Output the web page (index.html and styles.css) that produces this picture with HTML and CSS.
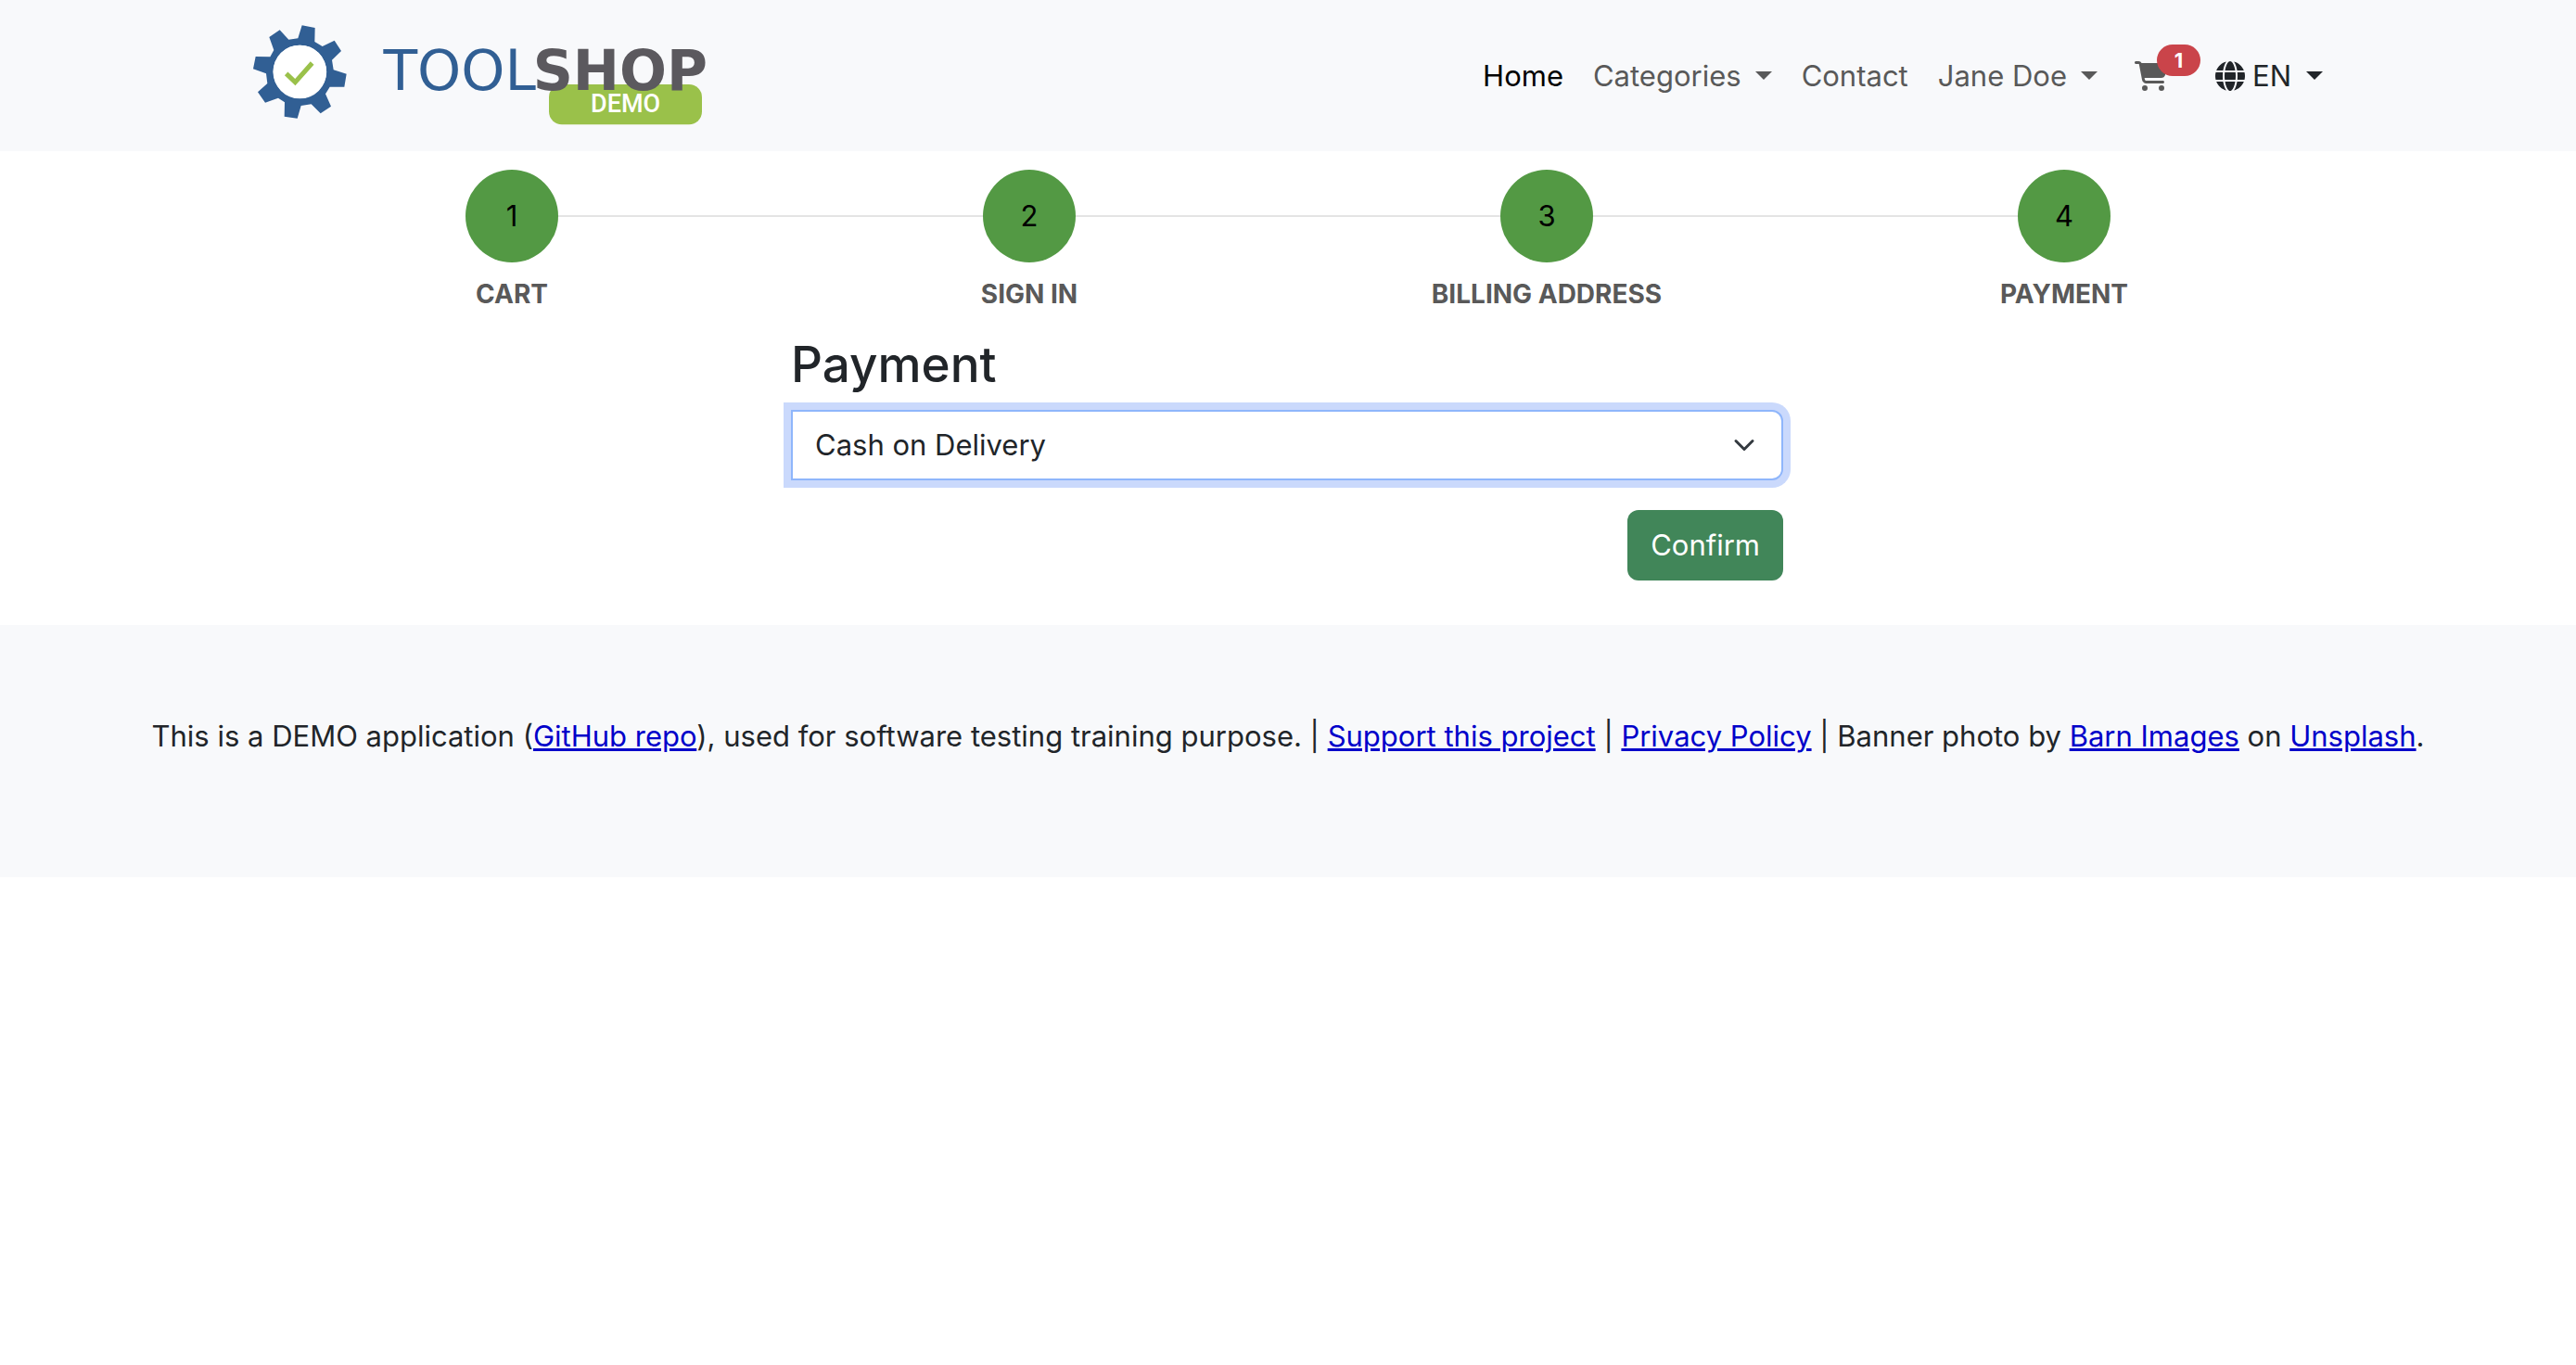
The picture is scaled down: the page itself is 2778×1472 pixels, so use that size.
FILE: index.html
```html
<!DOCTYPE html>
<html lang="en">
<head>
<meta charset="utf-8">
<meta name="viewport" content="width=device-width, initial-scale=1">
<title>Payment - Toolshop</title>
<link rel="stylesheet" href="styles.css">
</head>
<body>
<header class="navbar">
  <div class="container navbar-inner">
    <a class="brand" href="#" aria-label="Toolshop demo">
      <svg class="logo" viewBox="39 50 1476 330">
        <path fill="#315f94" fill-rule="evenodd" d="M197 51L239 59L238 104L263 119L302 100L324 134L294 163L299 195L341 208L334 250L287 250L273 273L291 313L257 336L227 306L194 311L182 352L140 346L141 300L120 286L78 301L54 267L85 239L81 207L39 192L47 152L94 153L106 131L91 89L125 66L154 97L184 93ZM190 115A86 86 0 1 0 190 288A86 86 0 1 0 190 115Z"/>
        <circle cx="190" cy="201" r="86" fill="#fff"/>
        <path fill="none" stroke="#9ac14a" stroke-width="15" d="M146 207L175 235L230 173"/>
        <rect x="996" y="242" width="495" height="130" rx="42" fill="#9ac14a"/>
        <text class="logo-tool" x="954" y="260">TOOL</text>
        <text class="logo-shop" x="944" y="260">SHOP</text>
        <text class="logo-demo" x="1244" y="333">DEMO</text>
      </svg>
    </a>
    <nav class="nav" aria-label="Main">
      <a class="nav-link active" href="#">Home</a>
      <button class="nav-link caret" type="button">Categories</button>
      <a class="nav-link" href="#">Contact</a>
      <button class="nav-link caret" type="button">Jane Doe</button>
      <a class="nav-link cart" href="#" aria-label="Cart">
        <svg class="cart-icon" viewBox="0 0 576 512"><path fill="currentColor" d="M0 24C0 10.7 10.7 0 24 0L69.5 0c22 0 41.5 12.8 50.6 32l411 0c26.3 0 45.5 25 38.6 50.4l-41 152.3c-8.5 31.4-37 53.3-69.5 53.3l-288.5 0 5.4 28.5c2.2 11.3 12.1 19.5 23.6 19.5L488 336c13.3 0 24 10.7 24 24s-10.7 24-24 24l-288.3 0c-34.6 0-64.3-24.6-70.7-58.5L77.4 54.5c-.7-3.8-4-6.5-7.9-6.5L24 48C10.7 48 0 37.3 0 24zM128 464a48 48 0 1 1 96 0 48 48 0 1 1 -96 0zm336-48a48 48 0 1 1 0 96 48 48 0 1 1 0-96z"/></svg>
        <span class="badge">1</span>
      </a>
      <button class="nav-link language caret" type="button">
        <svg class="globe-icon" viewBox="0 0 512 512"><path fill="currentColor" d="M352 256c0 22.2-1.2 43.6-3.3 64l-185.3 0c-2.2-20.4-3.3-41.8-3.3-64s1.2-43.6 3.3-64l185.3 0c2.2 20.4 3.3 41.8 3.3 64zm28.8-64l123.1 0c5.3 20.5 8.1 41.9 8.1 64s-2.8 43.5-8.1 64l-123.1 0c2.1-20.6 3.2-42 3.2-64s-1.1-43.4-3.2-64zm112.6-32l-116.7 0c-10-63.9-29.8-117.4-55.3-151.6c78.3 20.7 142 77.5 171.9 151.6zm-149.1 0l-176.6 0c6.1-36.4 15.5-68.6 27-94.7c10.5-23.6 22.2-40.7 33.5-51.5C239.4 3.2 248.7 0 256 0s16.6 3.2 27.8 13.8c11.3 10.8 23 27.9 33.5 51.5c11.6 26 20.9 58.2 27 94.7zm-209 0L18.6 160C48.6 85.9 112.2 29.1 190.6 8.4C165.1 42.6 145.3 96.1 135.3 160zM8.1 192l123.1 0c-2.1 20.6-3.2 42-3.2 64s1.1 43.4 3.2 64L8.1 320C2.8 299.5 0 278.1 0 256s2.8-43.5 8.1-64zM194.7 446.6c-11.6-26-20.9-58.2-27-94.6l176.6 0c-6.1 36.4-15.5 68.6-27 94.6c-10.5 23.6-22.2 40.7-33.5 51.5C272.6 508.8 263.3 512 256 512s-16.6-3.2-27.8-13.8c-11.3-10.8-23-27.9-33.5-51.5zM135.3 352c10 63.9 29.8 117.4 55.3 151.6C112.2 482.9 48.6 426.1 18.6 352l116.7 0zm358.1 0c-30 74.1-93.6 130.9-171.9 151.6c25.5-34.2 45.2-87.7 55.3-151.6l116.7 0z"/></svg>
        EN
      </button>
    </nav>
  </div>
</header>
<main class="container">
  <ol class="steps">
    <li class="step"><div class="step-row"><span class="step-number">1</span></div><span class="step-label">CART</span></li>
    <li class="step"><div class="step-row"><span class="step-number">2</span></div><span class="step-label">SIGN IN</span></li>
    <li class="step"><div class="step-row"><span class="step-number">3</span></div><span class="step-label">BILLING ADDRESS</span></li>
    <li class="step"><div class="step-row"><span class="step-number">4</span></div><span class="step-label">PAYMENT</span></li>
  </ol>
  <form class="payment">
    <h1 class="payment-title"><label for="method">Payment</label></h1>
    <select class="payment-select" id="method">
      <option>Cash on Delivery</option>
    </select>
    <button class="confirm" type="button">Confirm</button>
  </form>
</main>
<footer class="footer">
  <p class="footer-text">This is a DEMO application (<a href="#">GitHub repo</a>), used for software testing training purpose. | <a href="#">Support this project</a> | <a href="#">Privacy Policy</a> | Banner photo by <a href="#">Barn Images</a> on <a href="#">Unsplash</a>.</p>
</footer>
</body>
</html>
```
FILE: styles.css
```css
* {
  box-sizing: border-box;
}

body {
  margin: 0;
  background: #fff;
  color: #212529;
  font-family: Inter, "Liberation Sans", sans-serif;
  font-size: 31px;
  line-height: 48px;
}

button,
select {
  font: inherit;
}

.container {
  max-width: 2280px;
  margin: 0 auto;
  padding: 0 24px;
}

.navbar {
  background: #f8f9fb;
}

.navbar-inner {
  display: flex;
  align-items: center;
  justify-content: space-between;
  min-height: 163px;
}

.brand,
.logo {
  display: block;
}

.logo {
  width: 492px;
  height: 110px;
}

.logo-tool {
  font: 180px "DejaVu Sans", sans-serif;
  fill: #315f94;
  text-anchor: end;
}

.logo-shop {
  font: bold 180px "DejaVu Sans", sans-serif;
  fill: #5b595e;
}

.logo-demo {
  font: 500 81px Roboto, sans-serif;
  fill: #fff;
  text-anchor: middle;
}

.nav {
  display: flex;
  align-items: center;
  gap: 32px;
}

.nav-link {
  display: flex;
  align-items: center;
  padding: 0;
  border: 0;
  background: none;
  color: #595959;
  text-decoration: none;
}

.nav-link.active {
  color: #000;
}

.caret::after {
  content: "";
  margin-left: 15px;
  border: 9px solid transparent;
  border-top-color: currentColor;
  border-bottom: 0;
}

.cart {
  position: relative;
  margin-left: 8px;
  margin-right: 19px;
}

.cart-icon {
  width: 36px;
  height: 32px;
}

.badge {
  position: absolute;
  left: 24px;
  bottom: 16px;
  width: 47px;
  border-radius: 17px;
  background: #ca444a;
  color: #fff;
  font-size: 22px;
  font-weight: 700;
  line-height: 34px;
  text-align: center;
}

.language {
  gap: 8px;
  color: #212529;
}

.language::after {
  margin-left: 8px;
}

.globe-icon {
  width: 32px;
  height: 32px;
}

.steps {
  display: grid;
  grid-template-columns: repeat(4, 1fr);
  margin: 0;
  padding: 20px 0 22px;
  list-style: none;
  text-align: center;
}

.step-row {
  display: flex;
  align-items: center;
}

.step-row::before,
.step-row::after {
  content: "";
  flex: 1;
  height: 2px;
  background: #e4e4e4;
}

.step:first-child .step-row::before,
.step:last-child .step-row::after {
  background: none;
}

.step-number {
  width: 100px;
  border-radius: 50%;
  background: #539944;
  color: #000;
  line-height: 100px;
}

.step-label {
  display: block;
  margin-top: 14px;
  color: #595959;
  font-size: 28px;
  font-weight: 700;
  line-height: 40px;
}

.payment {
  display: flex;
  flex-direction: column;
  width: 50%;
  margin: 0 auto;
  padding: 0 24px 48px 22px;
}

.payment-title {
  margin: 0 0 14px;
  font-size: 53px;
  font-weight: 500;
  line-height: 69px;
}

.payment-select {
  height: 76px;
  padding: 0 72px 0 24px;
  border: 2px solid #8fb6fb;
  border-radius: 0 12px 12px 0;
  outline: 0;
  box-shadow: 0 0 0 8px #cad9fc;
  appearance: none;
  background: #fff url("data:image/svg+xml,%3Csvg xmlns='http://www.w3.org/2000/svg' viewBox='0 0 16 16'%3E%3Cpath fill='none' stroke='%23343a40' stroke-linecap='round' stroke-linejoin='round' stroke-width='2' d='m2 5 6 6 6-6'/%3E%3C/svg%3E") no-repeat right 24px center / 32px 24px;
  color: #212529;
}

.confirm {
  align-self: flex-end;
  height: 76px;
  margin-top: 32px;
  padding: 0 25px;
  border: 0;
  border-radius: 12px;
  background: #418659;
  color: #fff;
}

.footer {
  padding: 96px 24px;
  background: #f8f9fb;
  text-align: center;
}

.footer-text {
  margin: 0 0 32px;
}

.footer a {
  color: #0000ca;
}
```
